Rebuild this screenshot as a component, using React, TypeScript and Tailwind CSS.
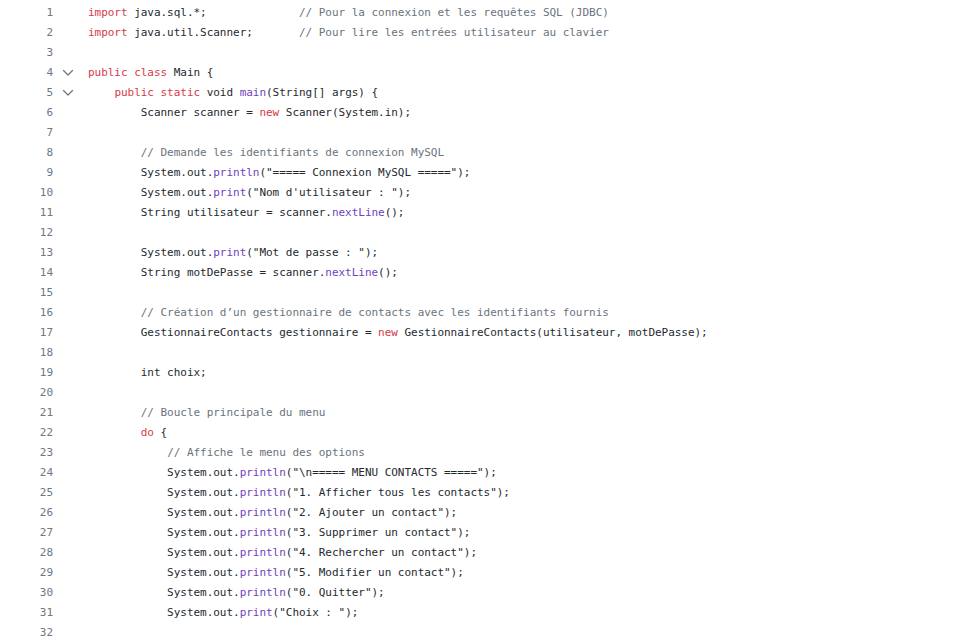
import React from "react";

type Tok = [string, string?];

const K = "text-[#d73a49]";
const F = "text-[#6f42c1]";
const C = "text-[#6a737d]";

const lines: Tok[][] = [
  [["import", K], [" java.sql.*;              "], ["// Pour la connexion et les requêtes SQL (JDBC)", C]],
  [["import", K], [" java.util.Scanner;       "], ["// Pour lire les entrées utilisateur au clavier", C]],
  [],
  [["public class", K], [" Main {"]],
  [["    "], ["public static", K], [" void "], ["main", F], ["(String[] args) {"]],
  [["        Scanner scanner = "], ["new", K], [" Scanner(System.in);"]],
  [],
  [["        "], ["// Demande les identifiants de connexion MySQL", C]],
  [["        System.out."], ["println", F], ["(\"===== Connexion MySQL =====\");"]],
  [["        System.out."], ["print", F], ["(\"Nom d'utilisateur : \");"]],
  [["        String utilisateur = scanner."], ["nextLine", F], ["();"]],
  [],
  [["        System.out."], ["print", F], ["(\"Mot de passe : \");"]],
  [["        String motDePasse = scanner."], ["nextLine", F], ["();"]],
  [],
  [["        "], ["// Création d’un gestionnaire de contacts avec les identifiants fournis", C]],
  [["        GestionnaireContacts gestionnaire = "], ["new", K], [" GestionnaireContacts(utilisateur, motDePasse);"]],
  [],
  [["        int choix;"]],
  [],
  [["        "], ["// Boucle principale du menu", C]],
  [["        "], ["do", K], [" {"]],
  [["            "], ["// Affiche le menu des options", C]],
  [["            System.out."], ["println", F], ["(\"\\n===== MENU CONTACTS =====\");"]],
  [["            System.out."], ["println", F], ["(\"1. Afficher tous les contacts\");"]],
  [["            System.out."], ["println", F], ["(\"2. Ajouter un contact\");"]],
  [["            System.out."], ["println", F], ["(\"3. Supprimer un contact\");"]],
  [["            System.out."], ["println", F], ["(\"4. Rechercher un contact\");"]],
  [["            System.out."], ["println", F], ["(\"5. Modifier un contact\");"]],
  [["            System.out."], ["println", F], ["(\"0. Quitter\");"]],
  [["            System.out."], ["print", F], ["(\"Choix : \");"]],
  [],
];

const folds = new Set([4, 5]);

function Chevron() {
  return (
    <svg width="12" height="8" viewBox="0 0 12 8" fill="none">
      <path d="M1.5 1.5 L6 6 L10.5 1.5" stroke="#6e7781" strokeWidth="1.3" strokeLinecap="round" strokeLinejoin="round" />
    </svg>
  );
}

export default function App() {
  return (
    <div
      className="w-[973px] h-[643px] bg-white overflow-hidden pt-[3px] text-[11px] tracking-[-0.03px] text-[#24292e]"
      style={{ fontFamily: "'DejaVu Sans Mono', 'Liberation Mono', monospace" }}
    >
      {lines.map((toks, i) => {
        const n = i + 1;
        return (
          <div key={i} className="flex h-[20px] items-center">
            <div className="w-[53px] text-right text-[#6e7781]">{n}</div>
            <div className="w-[35px] flex items-center justify-start pl-[9px]">
              {folds.has(n) ? <Chevron /> : null}
            </div>
            <div className="whitespace-pre">
              {toks.map((t, j) => (
                <span key={j} className={t[1] ?? ""}>
                  {t[0]}
                </span>
              ))}
            </div>
          </div>
        );
      })}
    </div>
  );
}
